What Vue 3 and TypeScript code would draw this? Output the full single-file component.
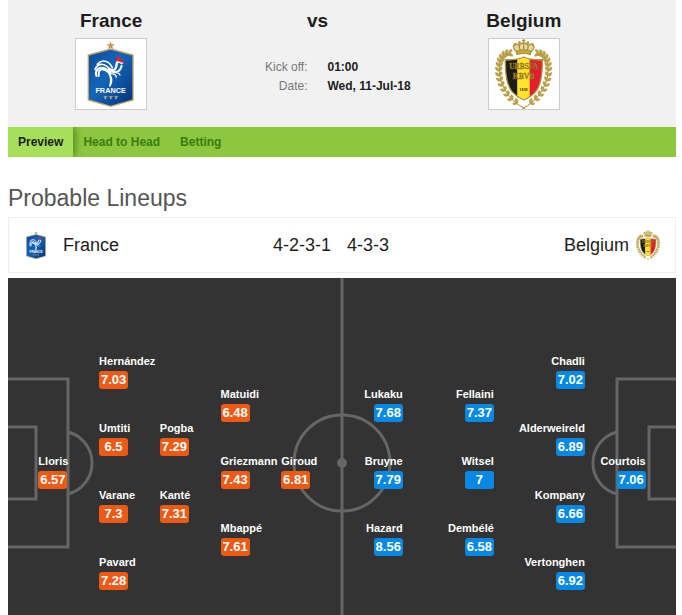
<script setup lang="ts">
interface Player {
  name: string
  rating: string
}

interface Line {
  // Grid line (in half-cells of the pitch) where the line of players starts
  column: number
  players: Player[]
}

interface Leaf {
  x: number
  y: number
  angle: number
}

const p = (name: string, rating: string): Player => ({ name, rating })

const home: Line[] = [
  { column: 2, players: [p('Lloris', '6.57')] },
  { column: 4, players: [p('Hernández', '7.03'), p('Umtiti', '6.5'), p('Varane', '7.3'), p('Pavard', '7.28')] },
  { column: 6, players: [p('Pogba', '7.29'), p('Kanté', '7.31')] },
  { column: 8, players: [p('Matuidi', '6.48'), p('Griezmann', '7.43'), p('Mbappé', '7.61')] },
  { column: 10, players: [p('Giroud', '6.81')] },
]

const away: Line[] = [
  { column: 12, players: [p('Lukaku', '7.68'), p('Bruyne', '7.79'), p('Hazard', '8.56')] },
  { column: 15, players: [p('Fellaini', '7.37'), p('Witsel', '7'), p('Dembélé', '6.58')] },
  { column: 18, players: [p('Chadli', '7.02'), p('Alderweireld', '6.89'), p('Kompany', '6.66'), p('Vertonghen', '6.92')] },
  { column: 20, players: [p('Courtois', '7.06')] },
]

const sides = [
  { id: 'home', lines: home },
  { id: 'away', lines: away },
]

const tabs = ['Preview', 'Head to Head', 'Betting']

// Leaves of the laurel branch, in pairs along a cubic curve
function branch(): Leaf[] {
  const c = [[120, 160], [74, 156], [70, 278], [154, 314]]
  const at = (t: number, i: number) =>
    (1 - t) ** 3 * c[0][i] + 3 * (1 - t) ** 2 * t * c[1][i] + 3 * (1 - t) * t * t * c[2][i] + t ** 3 * c[3][i]
  const leaves: Leaf[] = []
  for (let n = 0; n < 14; n++) {
    const t = n / 14 + 0.03
    const x = at(t, 0)
    const y = at(t, 1)
    const heading = (Math.atan2(y - at(t + 0.01, 1), x - at(t + 0.01, 0)) * 180) / Math.PI
    leaves.push({ x, y, angle: heading + 38 }, { x, y, angle: heading - 38 })
  }
  return leaves
}
const leaves = branch()
</script>

<template>
  <svg class="defs" aria-hidden="true">
    <defs>
      <linearGradient id="blue" x1="0" y1="0" x2="1" y2="1">
        <stop offset="0" stop-color="#0b4a9c" />
        <stop offset="0.45" stop-color="#1266b8" />
        <stop offset="1" stop-color="#062f78" />
      </linearGradient>
      <clipPath id="shield-clip">
        <path d="M107 181Q140 182 162 172Q184 182 218 181Q219 250 198 275Q184 291 162 299Q141 291 127 275Q106 250 107 181Z" />
      </clipPath>
      <g id="france-art">
        <path d="M153 148L220 166V301L153 320L86 301V166Z" fill="url(#blue)" stroke="#c3a36b" stroke-width="4" />
        <path d="M153 125L156 134L166 134L158 140L161 149L153 144L145 149L148 140L140 134L150 134Z" fill="#bd965b" />
        <g fill="none" stroke="#fff" stroke-linecap="round">
          <path d="M151 258Q157 243 151 226Q144 211 126 209Q116 211 117 229" stroke-width="6" />
          <path d="M152 220Q137 201 121 205Q105 210 110 229" stroke-width="6" />
          <path d="M154 213Q139 192 122 194Q111 197 106 209" stroke-width="5" />
          <path d="M158 204Q148 183 130 184Q119 186 113 194" stroke-width="5" />
          <path d="M148 207Q169 220 171 193Q173 181 183 188" stroke-width="7" />
          <path d="M151 214Q180 224 186 198" stroke-width="6" />
          <path d="M154 222Q168 222 170 232M162 218Q178 218 181 226M152 231Q158 235 155 250" stroke-width="4" />
        </g>
        <path d="M167 187Q165 177 173 181Q169 169 178 169L181 176Q186 176 184 183Q192 180 194 189L186 193Q181 184 174 185Q169 183 167 187Z" fill="#ef2030" />
        <path d="M182 186L192 191L184 194Z" fill="#fff" />
        <text x="153" y="281" text-anchor="middle" font-family="Liberation Sans, sans-serif" font-weight="700" font-size="22" fill="#fff">FRANCE</text>
        <path d="M132 290h12l-5 3v5h-4v-5zM148 290h12l-5 3v5h-4v-5zM164 290h12l-5 3v5h-4v-5z" fill="#b9ad92" stroke="#b9ad92" />
      </g>
      <g id="laurel">
        <path d="M120 160C74 156 70 278 166 326" fill="none" stroke="#a18a35" stroke-width="3" />
        <path
          v-for="(leaf, i) in leaves"
          :key="i"
          d="M0 0Q8 -9 16 0Q8 8 0 0Z"
          fill="#c0a444"
          stroke="#a18a3a"
          stroke-width="1"
          :transform="`translate(${leaf.x} ${leaf.y}) rotate(${leaf.angle})`"
        />
      </g>
      <g id="belgium-art">
        <use href="#laurel" />
        <use href="#laurel" transform="translate(324 0) scale(-1 1)" />
        <g stroke="#b0943c" stroke-width="4" fill="#e6d8a0">
          <path d="M141 156Q123 139 138 133Q150 130 155 153M183 156Q201 139 186 133Q174 130 169 153" />
          <path d="M153 154Q141 130 162 129Q183 130 171 154M162 129V154" />
          <path d="M140 154Q162 146 184 154L182 163Q162 157 142 163Z" fill="#c7aa45" />
          <path d="M162 117V128M157 122H167" />
        </g>
        <g fill="#b4983c">
          <circle cx="136" cy="133" r="4" /><circle cx="149" cy="128" r="4" />
          <circle cx="175" cy="128" r="4" /><circle cx="188" cy="133" r="4" />
        </g>
        <g clip-path="url(#shield-clip)">
          <path d="M104 168H144V302H104Z" fill="#1d1b18" />
          <path d="M143 168H181V302H143Z" fill="#ffe52a" />
          <path d="M180 168H222V302H180Z" fill="#e51c2d" />
        </g>
        <path d="M107 179Q140 181 162 171Q184 181 218 179Q219 250 198 275Q184 291 162 300Q141 291 127 275Q106 250 107 179Z" fill="none" stroke="#ad9139" stroke-width="4" />
        <g font-family="Liberation Serif, serif" font-weight="700" text-anchor="middle" fill="#b08c2a" stroke="#8a6d22" stroke-width="1">
          <text x="162" y="208" font-size="22">URBSFA</text>
          <text x="162" y="236" font-size="23">KBVB</text>
        </g>
        <text x="162" y="272" text-anchor="middle" font-family="Liberation Sans, sans-serif" font-weight="700" font-size="11" fill="#3a3520">1895</text>
      </g>
    </defs>
  </svg>

  <main class="page">
    <header class="match">
      <section class="side">
        <h2>France</h2>
        <svg class="crest" viewBox="49 118 210 210" role="img" aria-label="France"><use href="#france-art" /></svg>
      </section>
      <section class="side">
        <h2>vs</h2>
        <dl class="facts">
          <dt>Kick off:</dt>
          <dd>01:00</dd>
          <dt>Date:</dt>
          <dd>Wed, 11-Jul-18</dd>
        </dl>
      </section>
      <section class="side">
        <h2>Belgium</h2>
        <svg class="crest" viewBox="58 117 210 210" role="img" aria-label="Belgium"><use href="#belgium-art" /></svg>
      </section>
    </header>

    <nav class="tabs">
      <a v-for="(tab, i) in tabs" :key="tab" href="#" :class="{ active: i === 0 }">{{ tab }}</a>
    </nav>

    <h1>Probable Lineups</h1>

    <section class="teams">
      <div class="team">
        <svg class="mini" viewBox="84 124 138 198" aria-hidden="true"><use href="#france-art" /></svg>
        <span class="team-name">France</span>
        <span>4-2-3-1</span>
      </div>
      <div class="team">
        <span class="team-name">4-3-3</span>
        <span>Belgium</span>
        <svg class="mini" viewBox="76 116 172 212" aria-hidden="true"><use href="#belgium-art" /></svg>
      </div>
    </section>

    <section class="pitch">
      <svg class="markings" viewBox="0 0 668 370" preserveAspectRatio="none" aria-hidden="true">
        <g fill="none" stroke="#666" stroke-width="3">
          <path d="M334 0V370" />
          <circle cx="334" cy="185" r="48" />
          <path d="M-2 101H60V269H-2M-2 149H28V221H-2M60 154A32 32 0 0 1 60 216" />
          <path d="M670 101H609V269H670M670 149H641V221H670M609 154A32 32 0 0 0 609 216" />
        </g>
        <circle cx="334" cy="185" r="5" fill="#666" />
      </svg>
      <template v-for="side in sides" :key="side.id">
        <ul
          v-for="line in side.lines"
          :key="line.column"
          class="line"
          :class="side.id"
          :style="{ gridColumnStart: line.column }"
        >
          <li v-for="player in line.players" :key="player.name">
            <span class="name">{{ player.name }}</span>
            <span class="rating">{{ player.rating }}</span>
          </li>
        </ul>
      </template>
    </section>
  </main>
</template>

<style>
body {
  background: #fff;
}
</style>

<style scoped>
.defs {
  position: absolute;
  width: 0;
  height: 0;
}

.page {
  padding: 0 6px 0 8px;
  font-family: "Liberation Sans", Arial, sans-serif;
  font-size: 12px;
  color: #1d1d1d;
}

.match {
  display: grid;
  grid-template-columns: repeat(3, 1fr);
  padding: 10px 49px 17px 0;
  background: #f1f1f1;
}

.side {
  display: flex;
  flex-direction: column;
  align-items: center;
}

h2 {
  margin: 0 0 6px;
  font-size: 19px;
  line-height: 22px;
}

.crest {
  box-sizing: border-box;
  width: 72px;
  height: 72px;
  border: 1px solid #ccc;
  background: #fff;
}

.facts {
  display: grid;
  grid-template-columns: 1fr 1fr;
  column-gap: 20px;
  width: 100%;
  margin: 20px 0 0;
  line-height: 19px;
}

dt {
  color: #777;
  text-align: right;
}

dd {
  margin: 0;
  font-weight: 700;
  white-space: nowrap;
}

.tabs {
  display: flex;
  background: #8dc63f;
  line-height: 30px;
  font-weight: 700;
}

.tabs a {
  padding: 0 10px;
  color: #3a7d0b;
  text-decoration: none;
}

.tabs .active {
  background: #a6e05a;
  box-shadow: 2px 0 7px rgb(30 70 0 / 50%);
  clip-path: inset(0 -10px 0 0);
  color: #1d1d1d;
}

h1 {
  margin: 27px 0 5px;
  font-size: 23px;
  font-weight: 400;
  line-height: 28px;
  color: #555;
}

.teams {
  display: grid;
  grid-template-columns: 1fr 1fr;
  column-gap: 10px;
  border: 1px solid #eee;
  font-size: 18px;
  line-height: 54px;
}

.team {
  display: flex;
  align-items: center;
  padding: 0 6px 0 16px;
}

.team + .team {
  padding: 0 14px 0 0;
}

.team-name {
  flex: 1;
}

.mini {
  width: 22px;
  height: 28px;
  margin-right: 16px;
}

.team + .team .mini {
  width: 26px;
  height: 30px;
  margin: 0 0 0 6px;
}

.pitch {
  position: relative;
  display: grid;
  grid-template-columns: repeat(22, minmax(0, 1fr));
  min-height: 370px;
  margin-top: 5px;
  overflow: hidden;
  background: #333;
}

.markings {
  position: absolute;
  width: 100%;
  height: 100%;
}

.line {
  position: relative;
  grid-row: 1;
  grid-column-end: span 2;
  display: flex;
  flex-direction: column;
  justify-content: center;
  margin: 0;
  padding: 18px 0 0;
  list-style: none;
}

.line li {
  display: flex;
  flex-direction: column;
  justify-content: center;
  align-items: flex-start;
  gap: 3px;
  height: 67px;
  color: #fff;
  font-weight: 700;
}

.away li {
  align-items: flex-end;
}

.name {
  font-size: 11px;
  line-height: 13px;
  white-space: nowrap;
}

.rating {
  width: 29px;
  border-radius: 3px;
  background: #ee5a14;
  font-size: 13px;
  line-height: 18px;
  text-align: center;
}

.away .rating {
  background: #0589e4;
}
</style>
